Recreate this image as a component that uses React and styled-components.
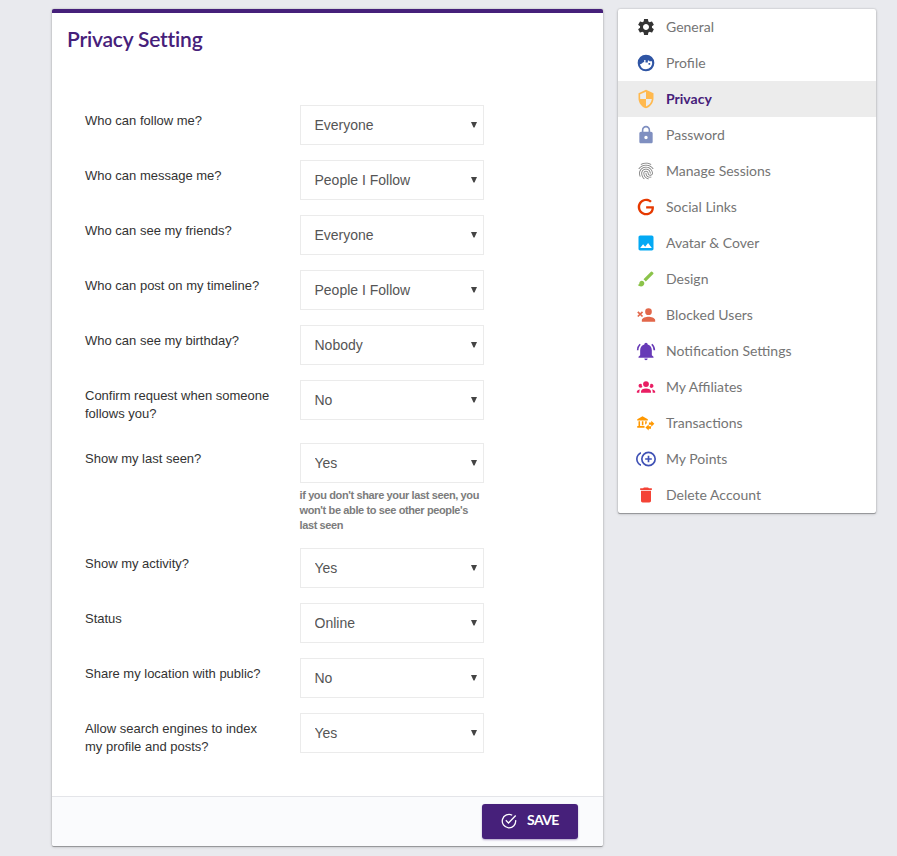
import React from "react";
import styled, { createGlobalStyle } from "styled-components";
import { MdSettings, MdSecurity, MdLock, MdFingerprint, MdImage, MdBrush, MdDelete } from "react-icons/md";

const Global = createGlobalStyle`
  * { box-sizing: border-box; }
  body { margin: 0; background: #e9eaee; font-family: "Liberation Sans", Arial, sans-serif; }
`;

const Page = styled.div`
  display: flex;
  align-items: flex-start;
  gap: 15px;
  height: 856px;
  padding: 9px 21px 0 52px;
  overflow: hidden;
`;

const Card = styled.div`
  background: #fff;
  border-radius: 2px;
  box-shadow: 0 1px 0 #97989b, 0 0 2px rgba(0, 0, 0, 0.2), 0 1px 3px rgba(0, 0, 0, 0.22);
`;

const SettingsCard = styled(Card)`
  display: flex;
  flex-direction: column;
  width: 551px;
  height: 837px;
  border-top: 4px solid #46207a;
`;

const Title = styled.h1`
  margin: 0;
  padding: 12px 15px 0;
  height: 92px;
  font: 600 21px/28px Lato, sans-serif;
  font-variant-ligatures: none;
  letter-spacing: -0.2px;
  color: #46207a;
`;

const Form = styled.form`
  display: flex;
  flex: 1;
  flex-direction: column;
  gap: 15px;
  padding-left: 33px;
`;

const Row = styled.div`
  display: grid;
  grid-template-columns: 185px 184px;
  column-gap: 30px;
  align-items: start;
`;

const Label = styled.label`
  padding: 7px 0 5px;
  font-size: 13px;
  line-height: 18px;
  color: #333;
`;

const SelectBox = styled.div`
  display: grid;
  align-items: center;
  & > * { grid-area: 1 / 1; }
`;

const Select = styled.select`
  appearance: none;
  width: 184px;
  height: 40px;
  padding: 0 13.5px;
  border: 1px solid #ebebeb;
  border-radius: 0;
  background: #fff;
  font: 14px "Liberation Sans", Arial, sans-serif;
  color: #555;
`;

const Arrow = styled.svg`
  justify-self: end;
  margin: 0 7px 1px 0;
  pointer-events: none;
`;

const Help = styled.small`
  display: block;
  margin: 5px 0 0 -0.5px;
  font-size: 11px;
  font-weight: 700;
  line-height: 15px;
  letter-spacing: -0.38px;
  color: #7c7c7c;
`;

const Footer = styled.div`
  display: flex;
  justify-content: flex-end;
  height: 50px;
  padding: 7px 25px 0;
  border-top: 1px solid #e4e5e9;
  border-radius: 0 0 2px 2px;
  background: #fafbfd;
`;

const SaveButton = styled.button`
  display: flex;
  align-items: center;
  gap: 10px;
  width: 96px;
  height: 35px;
  padding: 0 0 1px 19px;
  border: 0;
  border-radius: 3px;
  background: #46207a;
  box-shadow: 0 1px 2px rgba(70, 32, 122, 0.4);
  font: 700 14px Lato, sans-serif;
  letter-spacing: -0.6px;
  color: #fff;
`;

const ButtonText = styled.span`
  padding-bottom: 3px;
`;

const Sidebar = styled(Card)`
  width: 258px;
`;

const Item = styled.a`
  display: flex;
  align-items: center;
  gap: 10px;
  height: 36px;
  padding-left: 18px;
  background: ${(p) => (p.$active ? "#ececec" : "transparent")};
  font: ${(p) => (p.$active ? 700 : 400)} 14px Lato, sans-serif;
  color: ${(p) => (p.$active ? "#46207a" : "#757575")};
  & > svg { width: 20px; height: 20px; color: ${(p) => p.$tint}; fill: currentColor; }
`;

const ItemText = styled.span`
  padding-bottom: 2px;
`;

const shape = (d) => () => (
  <svg viewBox="0 0 24 24"><path fillRule="evenodd" d={d} /></svg>
);

const Face = shape("M12 2a10 10 0 1 0 0 20 10 10 0 0 0 0-20M4.800 13.200c1.700 0 2.900-.8 3.600-2.200h1.400V8.500h1.600v2.900h2.800V9h1.600v1h3.400a7.600 7.600 0 0 1-7.200 9.600 7.600 7.600 0 0 1-7.200-6.400M15 12v2h2v-2h-2");
const Google = shape("M21.350 11.100H12.180V13.830H18.690C18.360 17.640 15.190 19.270 12.190 19.270C8.360 19.270 5 16.250 5 12C5 7.900 8.200 4.730 12.200 4.730C15.290 4.730 17.100 6.700 17.100 6.700L19 4.720C19 4.720 16.560 2 12.100 2C6.420 2 2.030 6.800 2.030 12C2.030 17.050 6.160 22 12.250 22C17.600 22 21.500 18.330 21.500 12.910C21.500 11.760 21.350 11.100 21.350 11.100Z");
const Blocked = shape("M15 4a4 4 0 1 1 0 8 4 4 0 0 1 0-8M15 14c2.670 0 8 1.330 8 4v2H7v-2c0-2.670 5.330-4 8-4M5 9.590l2.120-2.130 1.420 1.420L6.410 11l2.130 2.120-1.420 1.420L5 12.410l-2.120 2.130-1.420-1.420L3.590 11 1.460 8.880l1.420-1.420L5 9.590Z");
const Bell = shape("M21 19v1H3v-1l2-2v-6c0-3.100 2.030-5.830 5-6.710V4a2 2 0 1 1 4 0v.29c2.970.88 5 3.610 5 6.710v6l2 2M14 21a2 2 0 1 1-4 0h4M19.750 3.190 18.330 4.610A8.980 8.980 0 0 1 21 11h2c0-2.930-1.160-5.750-3.250-7.810M1 11h2c0-2.400.96-4.700 2.670-6.390L4.250 3.190A10.960 10.960 0 0 0 1 11");
const Affiliates = shape("M12 5a3.500 3.500 0 1 0 0 7 3.500 3.500 0 0 0 0-7M5.500 8a2.500 2.500 0 1 0 0 5 2.500 2.500 0 0 0 2.200-1.300C6.900 10.600 6.700 9.600 6.800 8.400A2.500 2.500 0 0 0 5.500 8m13 0a2.500 2.500 0 0 0-1.300.4c.1 1.200-.2 2.300-.9 3.300A2.500 2.500 0 1 0 18.500 8M12 13.750c-3.310 0-6 1.600-6 3.500V19h12v-1.750c0-1.900-2.690-3.500-6-3.500M4.900 14.900C2.700 15.200 1 16.200 1 17.500V19h3v-1.750c0-.9.300-1.700.9-2.350m14.200 0c.600.650.900 1.450.900 2.350V19h3v-1.500c0-1.300-1.700-2.300-3.900-2.600");
const Transactions = shape("M1.500 7.500 7.800 4l6.400 3.500V9H1.500V7.500M3 9.800h1.900v5.700h5.300v2.200H1.500v-2.200H3V9.800M7 9.800h1.900v5H7v-5M11 9.800h1.900v2.400l-1.900 2V9.800M15.500 11.300h2.800V9.200l3.700 3.600-3.700 3.600v-2.200h-2.800v-2.900M18 16v2.800h-2.800V21L11.300 17.400l3.900-3.600V16H18");
const Points = shape("M16 8h-2v3h-3v2h3v3h2v-3h3v-2h-3V8M2 12c0-2.790 1.640-5.200 4-6.320V3.500C2.500 4.760 0 8.090 0 12s2.500 7.240 6 8.500v-2.180C3.640 17.200 2 14.790 2 12m13-9a9 9 0 1 0 0 18 9 9 0 0 0 0-18m0 16a7 7 0 1 1 0-14 7 7 0 0 1 0 14");

const fields = [
  ["Who can follow me?", "Everyone"],
  ["Who can message me?", "People I Follow"],
  ["Who can see my friends?", "Everyone"],
  ["Who can post on my timeline?", "People I Follow"],
  ["Who can see my birthday?", "Nobody"],
  ["Confirm request when someone follows you?", "No"],
  ["Show my last seen?", "Yes", "if you don't share your last seen, you won't be able to see other people's last seen"],
  ["Show my activity?", "Yes"],
  ["Status", "Online"],
  ["Share my location with public?", "No"],
  ["Allow search engines to index my profile and posts?", "Yes"],
];

const menu = [
  ["General", MdSettings, "#333"],
  ["Profile", Face, "#2f55a4"],
  ["Privacy", MdSecurity, "#ffb94f"],
  ["Password", MdLock, "#7f8fc0"],
  ["Manage Sessions", MdFingerprint, "#777"],
  ["Social Links", Google, "#e63900"],
  ["Avatar & Cover", MdImage, "#03a9f4"],
  ["Design", MdBrush, "#8bc34a"],
  ["Blocked Users", Blocked, "#e2674a"],
  ["Notification Settings", Bell, "#673ab7"],
  ["My Affiliates", Affiliates, "#e91e63"],
  ["Transactions", Transactions, "#ff9800"],
  ["My Points", Points, "#3f51b5"],
  ["Delete Account", MdDelete, "#f44336"],
];

export default function App() {
  return (
    <Page>
      <Global />
      <SettingsCard>
        <Title>Privacy Setting</Title>
        <Form>
          {fields.map(([label, value, help]) => (
            <Row key={label}>
              <Label>{label}</Label>
              <div>
                <SelectBox>
                  <Select aria-label={label} defaultValue={value}>
                    <option>{value}</option>
                  </Select>
                  <Arrow width="6" height="7" viewBox="0 0 6 7"><path d="M0 1h6L3.500 6.500h-1z" fill="#444" /></Arrow>
                </SelectBox>
                {help && <Help>{help}</Help>}
              </div>
            </Row>
          ))}
        </Form>
        <Footer>
          <SaveButton type="button">
            <svg width="16" height="16" viewBox="0 0 16 16" fill="none" stroke="#fff" strokeWidth="1.300">
              <path d="M11.200 2.300A6.700 6.700 0 1 0 14.600 7.200M4.800 7.300l2.700 2.700L14.700 2.500" />
            </svg>
            <ButtonText>SAVE</ButtonText>
          </SaveButton>
        </Footer>
      </SettingsCard>
      <Sidebar>
        {menu.map(([label, Icon, tint]) => (
          <Item key={label} $tint={tint} $active={label === "Privacy"}>
            <Icon />
            <ItemText>{label}</ItemText>
          </Item>
        ))}
      </Sidebar>
    </Page>
  );
}
